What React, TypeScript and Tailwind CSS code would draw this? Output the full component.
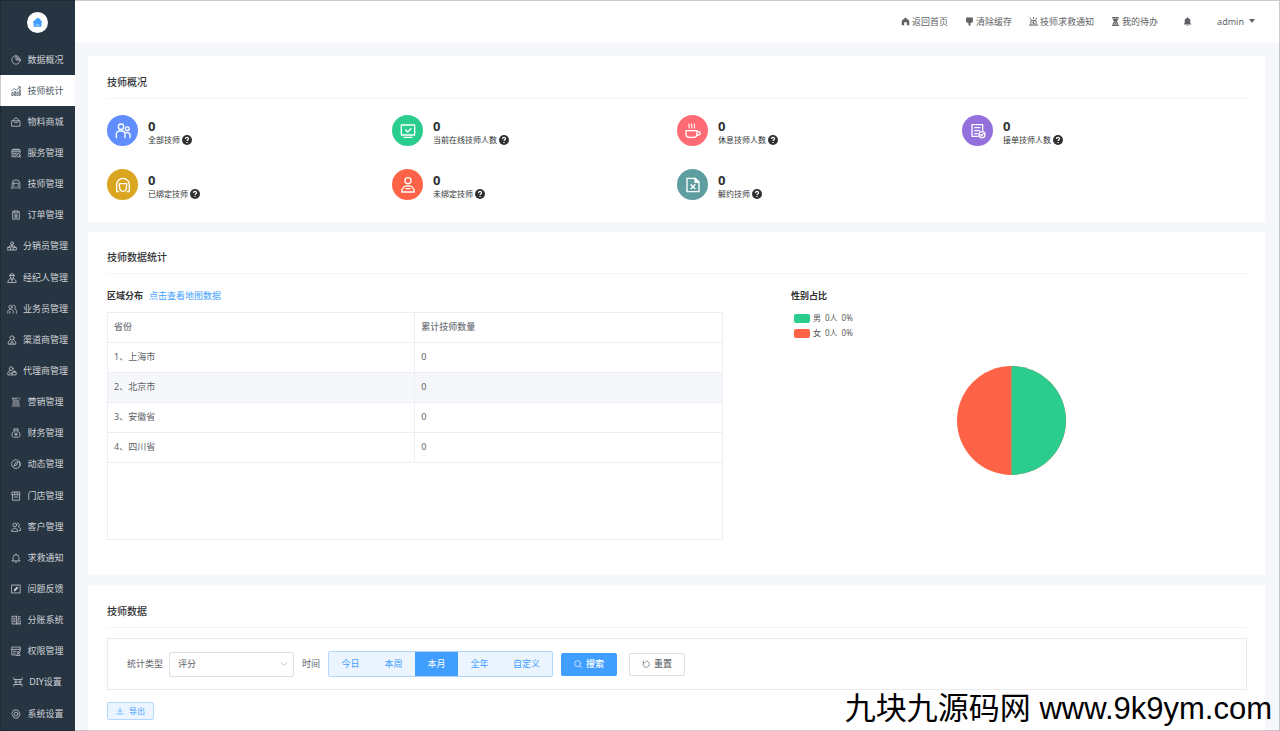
import React from 'react';

interface IconProps {
  children: React.ReactNode;
  className?: string;
  strokeWidth?: number;
}

function Icon({ children, className = 'size-[10px]', strokeWidth = 1.8 }: IconProps) {
  return (
    <svg
      viewBox="0 0 24 24"
      fill="none"
      stroke="currentColor"
      strokeWidth={strokeWidth}
      strokeLinecap="round"
      strokeLinejoin="round"
      className={`shrink-0 ${className}`}
      aria-hidden="true"
    >
      {children}
    </svg>
  );
}

const peopleShape = (
  <>
    <circle cx="9" cy="5.500" r="4" />
    <circle cx="18.500" cy="8.500" r="2.800" />
    <path d="M2 22v-5.500a4.500 4.500 0 0 1 4.500-4.500h4a4.500 4.500 0 0 1 4.500 4.500V22M16.500 14.500h2a4 4 0 0 1 4 4V22" />
  </>
);

const hoodShape = (
  <>
    <path d="M2.500 22V11.500a9.500 9.500 0 0 1 19 0V22h-3M2.500 22h3" />
    <path d="M6.500 10h11c0 9-1 11.500-5.500 11.500S6.500 19 6.500 10z" />
  </>
);

const menuItems: { label: string; icon: React.ReactNode; active?: boolean }[] = [
  {
    label: '数据概况',
    icon: (
      <>
        <circle cx="12" cy="12" r="10" />
        <path d="M12 2v10h10M15 5.500V9h3.500" />
      </>
    ),
  },
  {
    label: '技师统计',
    active: true,
    icon: (
      <>
        <path d="M2 22v-6h3v6zM8 22v-9h3v9zM14 22v-7h3v7zM20 22V9h2.500v13z" />
        <path d="M1.500 11.500L8 6l5 4 9-7.500M17.500 2H22v4" />
      </>
    ),
  },
  {
    label: '物料商城',
    icon: (
      <>
        <path d="M2.500 9h19v13h-19z" />
        <path d="M6 9c0-9 12-9 12 0M8 13h8" />
      </>
    ),
  },
  {
    label: '服务管理',
    icon: (
      <>
        <path d="M21.500 12V4h-19v17H12M2.500 9h19M7 2v4M12 2v4M17 2v4M6 13h7M6 17h5" />
        <circle cx="17.500" cy="17.500" r="4" />
        <path d="M20.500 20.500L23 22.500" />
      </>
    ),
  },
  { label: '技师管理', icon: hoodShape },
  {
    label: '订单管理',
    icon: (
      <>
        <path d="M8 4H4v18h16V4h-4M8 2h8v5H8zM8 12h8M8 17h8M12 12v7" />
      </>
    ),
  },
  {
    label: '分销员管理',
    icon: (
      <>
        <circle cx="12" cy="5.500" r="3.500" />
        <path d="M12 9v6M5 15v-3h14v3M1.500 15.500h7v6h-7zM15.500 15.500h7v6h-7zM8.500 21.500h7" />
      </>
    ),
  },
  {
    label: '经纪人管理',
    icon: (
      <>
        <path d="M7.500 6a4.500 4.500 0 0 1 9 0v2.500a4.500 4.500 0 0 1-9 0zM6 6h12" />
        <path d="M2 22c0-5 3-7 7-8.500l3 3 3-3c4 1.500 7 3.500 7 8.500zM12 16.500V22" />
      </>
    ),
  },
  {
    label: '业务员管理',
    icon: (
      <>
        <circle cx="8.500" cy="7" r="4" />
        <path d="M2 22v-4c0-3 2.500-5 6.500-5s6.500 2 6.500 5v4M15 3c5-1 7 5 3 8 3 1 4.500 3 4.500 6v5M7 22v-4" />
      </>
    ),
  },
  {
    label: '渠道商管理',
    icon: (
      <>
        <circle cx="12" cy="7" r="5" />
        <path d="M8.500 11L3 17v5h18v-5l-5.500-6M8 22l4-7 4 7" />
      </>
    ),
  },
  {
    label: '代理商管理',
    icon: (
      <>
        <circle cx="10" cy="6.500" r="4.500" />
        <path d="M7 10.500c-3 1.500-5 4-5 7.500v3.500h10M13.500 14.500h8.500v7h-8.500zM16 14.500v-2.500h3.500v2.500M6 17h5" />
      </>
    ),
  },
  {
    label: '营销管理',
    icon: (
      <>
        <path d="M4 3h11M19 2l2 3M5 3v5c0 3 3 4 6 4h2c3 0 6-1 6-4M8 12l-4 5h16l-4-5M3 21.500h18M9 7.500h6" />
      </>
    ),
  },
  {
    label: '财务管理',
    icon: (
      <>
        <path d="M8 7C3 10 2 14 2.500 18c.5 2.500 2 4 4 4h11c2 0 3.500-1.500 4-4 .5-4-.5-8-5.500-11zM8 7L6.500 2h11L16 7" />
        <path d="M9 11l3 3 3-3M12 14v5M9 15.500h6" />
      </>
    ),
  },
  {
    label: '动态管理',
    icon: (
      <>
        <path d="M20 5.500A10.500 10.500 0 1 1 17 3M20 5.500A10.500 10.500 0 0 1 21 17" />
        <path d="M17 7l-3 7-7 3 3-7z" />
      </>
    ),
  },
  {
    label: '门店管理',
    icon: (
      <>
        <path d="M3 2.500h18v6.500H3zM3.500 9v13h17V9M9 2.500V9M15 2.500V9" />
        <path d="M8 14.500h8" />
      </>
    ),
  },
  {
    label: '客户管理',
    icon: (
      <>
        <circle cx="9" cy="7" r="4.500" />
        <path d="M1.500 21.500c0-9 15-9 15 0zM15.500 2.500c5 0 6 7 1.500 8.500 4 1 6 4 6 9.500h-3" />
      </>
    ),
  },
  {
    label: '求救通知',
    icon: (
      <>
        <path d="M2.500 19h19M5 19v-8a7 7 0 0 1 14 0v8M12 2v2M10 22h4" />
      </>
    ),
  },
  {
    label: '问题反馈',
    icon: (
      <>
        <path d="M2 2.500h20v19H2z" />
        <path d="M8 16l1-4 6-5 1.500 2-5 6z" fill="currentColor" />
      </>
    ),
  },
  {
    label: '分账系统',
    icon: (
      <>
        <path d="M13 3H2.500v18.500H22M6 8h4M6 12h4M6 16h4M13 3v18.500M17 21V8h5M22 12v9.500M17 4h5" />
      </>
    ),
  },
  {
    label: '权限管理',
    icon: (
      <>
        <path d="M22 13V2.500H2V21.500h10M2 8h20M6 12.500h6M6 17h4" />
        <circle cx="17.500" cy="15.500" r="2.500" />
        <path d="M13.500 22c0-5 8.500-5 8.500 0z" />
      </>
    ),
  },
  {
    label: 'DIY设置',
    icon: (
      <>
        <path d="M2 2v4h20V2M4 12h16M2 22v-4h20v4M7 6v12M17 6v12" />
      </>
    ),
  },
  {
    label: '系统设置',
    icon: (
      <>
        <path d="M7.500 2.500h9L22 12l-5.500 9.500h-9L2 12z" />
        <circle cx="12" cy="12" r="4.500" />
      </>
    ),
  },
];

const stats = [
  { label: '全部技师', color: 'bg-[#608eff]', icon: peopleShape },
  {
    label: '当前在线技师人数',
    color: 'bg-[#2bcd8f]',
    icon: (
      <>
        <path d="M2 3h20v15H2zM6 21.500h12M8.500 10.500l3 3 5-5" />
      </>
    ),
  },
  {
    label: '休息技师人数',
    color: 'bg-[#ff6b74]',
    icon: (
      <>
        <path d="M1.500 11.500H18V16c0 3-2 5.500-5 5.500H6.500c-3 0-5-2.500-5-5.500zM18 13h2.500c3 0 3 5 0 5h-3" />
        <path d="M6 1.500c-1.500 2 1.500 3 0 6M10 1.500c-1.500 2 1.500 3 0 6M14 1.500c-1.500 2 1.500 3 0 6" strokeWidth="1.600" />
      </>
    ),
  },
  {
    label: '接单技师人数',
    color: 'bg-[#9370db]',
    icon: (
      <>
        <path d="M19 11V2.500H3V20h9M7 7h8M7 11.500h7M7 16h4" />
        <circle cx="18" cy="17.500" r="4.500" />
        <path d="M16 17.500l1.500 1.500 2.500-3" />
      </>
    ),
  },
  { label: '已绑定技师', color: 'bg-[#daa520]', icon: hoodShape },
  {
    label: '未绑定技师',
    color: 'bg-[#ff6347]',
    icon: (
      <>
        <circle cx="12" cy="5.500" r="4.500" />
        <path d="M2.500 22.500c0-12.500 19-12.500 19 0zM9 17.500h6" />
      </>
    ),
  },
  {
    label: '解约技师',
    color: 'bg-[#5f9ea0]',
    icon: (
      <>
        <path d="M3 2h12l6 6v14H3z" />
        <path d="M15 2v6h6z" fill="currentColor" />
        <path d="M9 11.500l6 6M15 11.500l-6 6" />
      </>
    ),
  },
];

const regions = ['上海市', '北京市', '安徽省', '四川省'];

const genders = [
  { name: '男', color: 'bg-[#2bcd8f]' },
  { name: '女', color: 'bg-[#ff6347]' },
];

const periods = ['今日', '本周', '本月', '全年', '自定义'];

const topLinks = [
  {
    label: '返回首页',
    icon: <path d="M12 1.500L22 10v12h-6.500v-8h-7v8H2V10z" fill="currentColor" stroke="none" />,
  },
  {
    label: '清除缓存',
    icon: <path d="M3 1h18v11l-2 3h-4l-1 8h-4l-1-8H5l-2-3z" fill="currentColor" stroke="none" />,
  },
  {
    label: '技师求救通知',
    icon: (
      <>
        <path d="M5 20V9.500h14V20M1 21.500h22M12 1v4M3 3l3 3M21 3l-3 3" strokeWidth="2.500" />
        <path d="M12 12l-2.500 4h5L12 19z" fill="currentColor" />
      </>
    ),
  },
  {
    label: '我的待办',
    icon: (
      <>
        <path d="M3 0h18v4H3zM3 20h18v4H3z" fill="currentColor" stroke="none" />
        <path d="M5 5h14c0 4-2 5-4 7 2 2 4 3 4 7H5c0-4 2-5 4-7-2-2-4-3-4-7z" fill="currentColor" stroke="none" />
        <path d="M9 17.500l3-3 3 3" stroke="white" />
      </>
    ),
  },
];

function Sidebar() {
  return (
    <aside className="flex w-[75px] shrink-0 flex-col bg-[#273442] pb-0.5 text-[#d0d3d6]">
      <div className="flex h-11 shrink-0 items-center justify-center">
        <a href="#" aria-label="首页" className="flex size-[21px] items-center justify-center rounded-full bg-white text-[#409eff]">
          <svg viewBox="0 0 24 24" className="size-[11px]" aria-hidden="true">
            <path d="M12 1.500L15 4V3h3v3.500L23.500 12H20.500v9.500h-17V12H.5z" fill="currentColor" />
            <path d="M9 19v-4M15 19v-4M12 19v-2" stroke="white" strokeWidth="1.200" />
          </svg>
        </a>
      </div>
      <nav className="flex flex-1 flex-col">
        {menuItems.map((item) => (
          <a
            key={item.label}
            href="#"
            className={`flex flex-1 items-center justify-center gap-1.5 text-[9px] leading-3 ${
              item.active ? 'bg-white text-[#4a5663]' : ''
            }`}
          >
            <Icon>{item.icon}</Icon>
            <span className="whitespace-nowrap">{item.label}</span>
          </a>
        ))}
      </nav>
    </aside>
  );
}

function TopBar() {
  return (
    <header className="flex h-[43px] shrink-0 items-center justify-end gap-[25px] bg-white pr-6 text-[9px] leading-3 text-[#606266]">
      <div className="flex items-center gap-[17px]">
        {topLinks.map((link) => (
          <a key={link.label} href="#" className="flex items-center gap-0.5">
            <Icon className="size-[9px]">{link.icon}</Icon>
            {link.label}
          </a>
        ))}
      </div>
      <button type="button" aria-label="消息">
        <Icon className="size-[9px]">
          <path d="M12 0l1.500 2.500c4 1 6 4 6 7.500v6l3 4h-21l3-4v-6c0-3.500 2-6.500 6-7.500zM9 21h6l-3 3z" fill="currentColor" stroke="none" />
        </Icon>
      </button>
      <button type="button" className="flex items-center gap-1">
        admin
        <svg viewBox="0 0 8 5" className="h-[5px] w-2" aria-hidden="true">
          <path d="M1 0h6L4 4z" fill="currentColor" />
        </svg>
      </button>
    </header>
  );
}

function CardTitle({ children }: { children: React.ReactNode }) {
  return (
    <h2 className="border-b border-[#f5f5f7] pb-2.5 text-[10px] leading-3 font-medium text-[#303133]">{children}</h2>
  );
}

function Overview() {
  return (
    <section className="bg-white pt-5 pr-[18px] pb-[22px] pl-[19px]">
      <CardTitle>技师概况</CardTitle>
      <div className="mt-4 grid grid-cols-4 gap-y-[23px]">
        {stats.map((stat) => (
          <div key={stat.label} className="flex items-center gap-2.5">
            <span className={`flex size-[31px] items-center justify-center rounded-full text-white ${stat.color}`}>
              <Icon className="size-4" strokeWidth={2}>{stat.icon}</Icon>
            </span>
            <div className="pt-0.5 text-[#303133]">
              <div className="text-[13px] leading-4 font-bold">0</div>
              <div className="flex items-center gap-0.5 text-[8px] leading-3">
                {stat.label}
                <svg viewBox="0 0 20 20" className="size-[10px]" role="img" aria-label="说明">
                  <circle cx="10" cy="10" r="10" fill="currentColor" />
                  <path d="M7 8c0-4 6-4 6-.5 0 2.500-3 2.500-3 4.500M10 14v2" fill="none" stroke="white" strokeWidth="2.400" />
                </svg>
              </div>
            </div>
          </div>
        ))}
      </div>
    </section>
  );
}

function Statistics() {
  return (
    <section className="bg-white pt-[19px] pr-[18px] pb-[35px] pl-[19px]">
      <CardTitle>技师数据统计</CardTitle>
      <div className="mt-4 flex justify-between">
        {/* Region distribution */}
        <div className="w-[54%]">
          <div className="flex gap-1.5 text-[9px] leading-3">
            <h3 className="font-bold text-[#303133]">区域分布</h3>
            <a href="#" className="text-[#409eff]">点击查看地图数据</a>
          </div>
          <div className="mt-2.5 h-[228px] border border-[#ebeef5]">
            <table className="w-full table-fixed border-collapse text-left text-[9px] leading-3 text-[#606266]">
              <thead>
                <tr className="h-[29px] border-b border-[#ebeef5] text-[#73767c]">
                  <th className="border-r border-[#ebeef5] px-1.5 font-medium">省份</th>
                  <th className="px-1.5 font-medium">累计技师数量</th>
                </tr>
              </thead>
              <tbody>
                {regions.map((region, index) => (
                  <tr key={region} className={`h-[30px] border-b border-[#ebeef5] ${index === 1 ? 'bg-[#f5f7fa]' : ''}`}>
                    <td className="border-r border-[#ebeef5] px-1.5">{index + 1}、{region}</td>
                    <td className="px-1.5">0</td>
                  </tr>
                ))}
              </tbody>
            </table>
          </div>
        </div>

        {/* Gender share */}
        <div className="w-2/5 pr-4">
          <h3 className="text-[9px] leading-3 font-bold text-[#303133]">性别占比</h3>
          <ul className="mt-2.5 flex flex-col gap-[3px] pl-[3px] text-[8px] leading-3 text-[#555555]">
            {genders.map((gender) => (
              <li key={gender.name} className="flex items-center gap-[3px]">
                <span className={`h-[9px] w-4 rounded-xs ${gender.color}`} />
                <span className="flex gap-1">
                  <span>{gender.name}</span>
                  <span>0人</span>
                  <span>0%</span>
                </span>
              </li>
            ))}
          </ul>
          <svg viewBox="0 0 110 110" className="mx-auto mt-[27px] size-[109px]" role="img" aria-label="性别占比">
            <circle cx="55" cy="55" r="55" fill="#ff6347" />
            <path d="M55 0a55 55 0 0 1 0 110z" fill="#2bcd8f" />
          </svg>
        </div>
      </div>
    </section>
  );
}

function Records() {
  return (
    <section className="flex-1 bg-white pt-5 pr-[18px] pl-[19px]">
      <CardTitle>技师数据</CardTitle>
      <form className="mt-2.5 flex items-center border border-[#ebebeb] py-3 pl-[19px] text-[9px] leading-3 text-[#606266]">
        <label htmlFor="type">统计类型</label>
        <div className="relative ml-1.5">
          <select
            id="type"
            defaultValue="评分"
            className="h-[25px] w-[125px] appearance-none rounded-xs border border-[#dcdfe6] bg-white pl-2"
          >
            <option>评分</option>
          </select>
          <svg viewBox="0 0 8 8" className="pointer-events-none absolute top-2 right-1.5 size-2" aria-hidden="true">
            <path d="M1 2.500l3 3 3-3" fill="none" stroke="#c0c4cc" strokeWidth="1" />
          </svg>
        </div>
        <span className="ml-2">时间</span>
        <div className="ml-2 flex h-[26px] overflow-hidden rounded-xs border border-[#b3d8ff] bg-[#ecf5ff] text-[#409eff]">
          {periods.map((period) => (
            <button
              key={period}
              type="button"
              className={`min-w-[43px] px-3 ${period === '本月' ? 'bg-[#409eff] text-white' : ''}`}
            >
              {period}
            </button>
          ))}
        </div>
        <button type="button" className="ml-2 flex h-[23px] w-14 items-center justify-center gap-1 rounded-xs bg-[#409eff] font-medium text-white">
          <Icon className="size-2" strokeWidth={2}>
            <circle cx="11" cy="11" r="9" />
            <path d="M18 18l5 5" />
          </Icon>
          搜索
        </button>
        <button type="button" className="ml-3 flex h-[23px] w-14 items-center justify-center gap-1 rounded-xs border border-[#dcdfe6] bg-white font-medium">
          <Icon className="size-2" strokeWidth={2}>
            <path d="M4 3v5h5M4 8a9.500 9.500 0 1 0 8-5" />
          </Icon>
          重置
        </button>
      </form>
      <button type="button" className="mt-3 flex h-[18px] items-center gap-[5px] rounded-xs border border-[#b3d8ff] bg-[#ecf5ff] px-2 text-[8px] leading-3 text-[#409eff]">
        <Icon className="size-2" strokeWidth={2}>
          <path d="M12 2v13M6 10l6 6 6-6M2 21h20" />
        </Icon>
        导出
      </button>
    </section>
  );
}

export default function App() {
  return (
    <div className="relative flex h-screen overflow-hidden bg-[#f5f7fa] font-['Noto_Sans','Noto_Sans_CJK_SC',sans-serif]">
      <Sidebar />
      <div className="flex min-w-0 flex-1 flex-col">
        <TopBar />
        <main className="flex flex-1 flex-col gap-2.5 pt-[13px] pr-[15px] pl-[13px]">
          <Overview />
          <Statistics />
          <Records />
        </main>
      </div>

      {/* Window frame and site mark */}
      <div className="pointer-events-none absolute inset-0 border border-black/20" />
      <p className="pointer-events-none absolute right-2 bottom-1 font-['Liberation_Sans','Noto_Sans_CJK_SC',sans-serif] text-[31px] leading-9 whitespace-nowrap text-black">
        九块九源码网 www.9k9ym.com
      </p>
    </div>
  );
}
